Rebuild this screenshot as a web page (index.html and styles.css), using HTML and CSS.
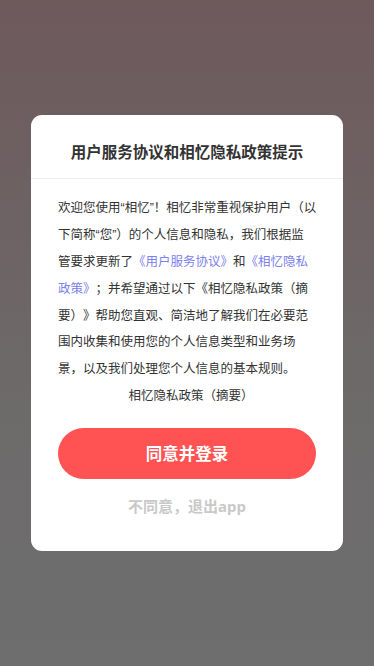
FILE: index.html
```html
<!DOCTYPE html>
<html lang="zh-CN">
<head>
<meta charset="utf-8">
<meta name="viewport" content="width=device-width, initial-scale=1">
<title>用户服务协议和相忆隐私政策提示</title>
<link rel="stylesheet" href="styles.css">
</head>
<body>
<div class="overlay">
  <div class="dialog">
    <div class="dialog-title">用户服务协议和相忆隐私政策提示</div>
    <div class="dialog-body">
      <p class="content">欢迎您使用“相忆”！相忆非常重视保护用户（以<br>下简称“您”）的个人信息和隐私，我们根据监<br>管要求更新了<a class="link">《用户服务协议》</a>和<a class="link">《相忆隐私<br>政策》</a>；并希望通过以下《相忆隐私政策（摘<br>要）》帮助您直观、简洁地了解我们在必要范<br>围内收集和使用您的个人信息类型和业务场<br>景，以及我们处理您个人信息的基本规则。</p>
      <p class="summary">相忆隐私政策（摘要）</p>
      <button class="btn-agree">同意并登录</button>
      <button class="btn-refuse">不同意，退出app</button>
    </div>
  </div>
</div>
</body>
</html>
```

FILE: styles.css
```css
* { box-sizing: border-box; }
html, body {
  margin: 0;
  padding: 0;
  height: 100%;
}
body {
  font-family: "Noto Sans", "Noto Sans CJK SC", sans-serif;
  color: #333;
  text-spacing-trim: space-all;
}
.overlay {
  height: 100%;
  display: flex;
  align-items: center;
  justify-content: center;
  background: linear-gradient(180deg, #6e595b 0%, #6d6a6a 60%, #6e6e6e 100%);
}
.dialog {
  width: 312px;
  background: #fff;
  border-radius: 11px;
  overflow: hidden;
}
.dialog-title {
  padding: 26px 0 15px;
  text-align: center;
  font-size: 15.5px;
  line-height: 22px;
  font-weight: 700;
  color: #333;
  border-bottom: 1px solid #ececec;
}
.dialog-body {
  padding: 16px 27px 34px;
  display: flex;
  flex-direction: column;
}
.content {
  margin: 0 -8px 0 0;
  font-family: "Liberation Sans", "Noto Sans CJK SC", sans-serif;
  font-size: 12.5px;
  line-height: 26.8px;
  color: #333;
  white-space: nowrap;
}
.link {
  color: #7c80ee;
  text-decoration: none;
}
.summary {
  margin: 0;
  padding-left: 8px;
  font-size: 12.5px;
  line-height: 26.8px;
  text-align: center;
  color: #333;
}
.btn-agree {
  margin-top: 18px;
  height: 51px;
  border: none;
  border-radius: 26px;
  background: #ff5252;
  color: #fff;
  font-family: inherit;
  font-size: 16.5px;
  font-weight: 700;
  padding: 0;
}
.btn-refuse {
  margin-top: 16px;
  border: none;
  background: none;
  padding: 0;
  height: 22px;
  line-height: 22px;
  font-family: inherit;
  font-size: 15px;
  font-weight: 700;
  color: #c9c9c9;
}
```
